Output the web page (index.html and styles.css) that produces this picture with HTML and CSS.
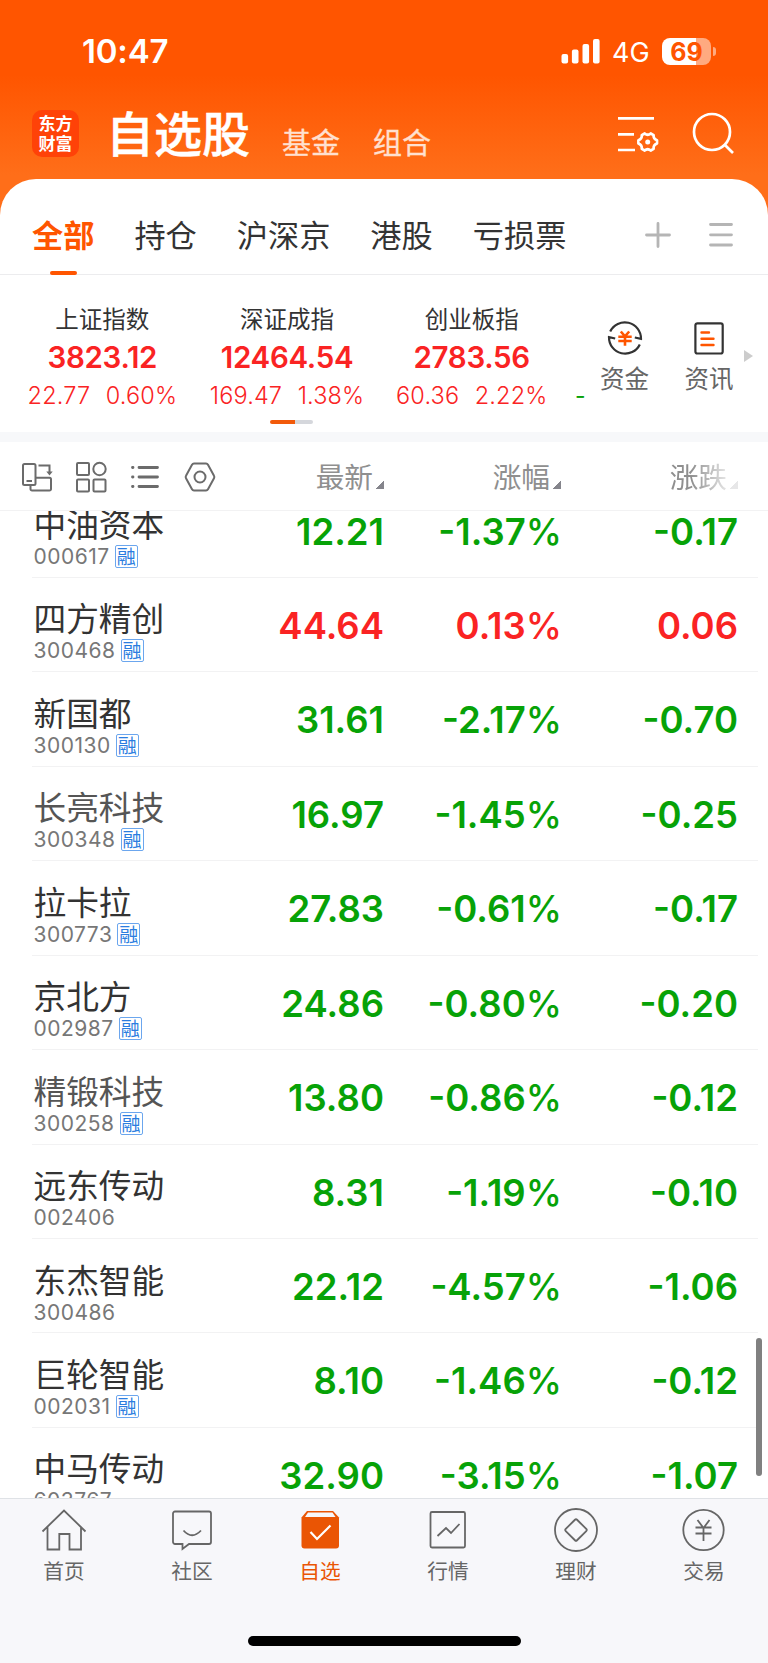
FILE: index.html
```html
<!DOCTYPE html>
<html lang="zh-CN">
<head>
  <meta charset="utf-8" />
  <meta name="viewport" content="width=device-width, initial-scale=1" />
  <title>自选股</title>
  <link rel="stylesheet" href="styles.css">
</head>
<body>
<div class="app">

<header class="top">
  <div class="status">
    <span class="status-time">10:47</span>
    <svg class="status-signal" width="39" height="25" viewBox="0 0 39 25" fill="#fff">
      <rect x="0.500" y="15" width="6.600" height="9.500" rx="2" />
      <rect x="10.900" y="10.500" width="6.600" height="14" rx="2" />
      <rect x="21.500" y="5" width="6.600" height="19.500" rx="2" />
      <rect x="32" y="0" width="6.600" height="24.500" rx="2" />
    </svg>
    <span class="status-net">4G</span>
    <span class="battery">69</span>
    <span class="battery-cap"></span>
  </div>
  <div class="nav">
    <div class="logo"><span>东方</span><span>财富</span></div>
    <h1 class="nav-title">自选股</h1>
    <a class="nav-link">基金</a>
    <a class="nav-link">组合</a>
    <svg class="nav-filter" width="44" height="44" viewBox="0 0 44 44" fill="none" stroke="#fff" stroke-width="2.700">
      <path d="M2 6.300h36M2 22.300h16M2 38h17" />
      <path stroke-linejoin="round" d="M28.700 20.500Q31.700 23 34.700 20.500L37.600 22.200Q37.200 26 41 27.200V30.600Q37.200 32 37.600 35.800L34.700 37.500Q31.700 35 28.700 37.500L25.800 35.800Q26.200 32 22.400 30.600V27.200Q26.200 26 25.800 22.200Z" transform="translate(0 1)" />
      <circle cx="31.700" cy="30" r="2.500" fill="#fff" stroke="none" />
    </svg>
    <svg class="nav-search" width="44" height="44" viewBox="0 0 44 44" fill="none" stroke="#fff" stroke-width="2.700">
      <circle cx="20" cy="20" r="18" />
      <path d="M32.700 32.700l8.300 8.300" />
    </svg>
  </div>
</header>

<main class="sheet">
  <nav class="tabs">
    <a class="tab tab--on">全部</a>
    <a class="tab">持仓</a>
    <a class="tab">沪深京</a>
    <a class="tab">港股</a>
    <a class="tab">亏损票</a>
    <svg class="tabs-add" width="26" height="26" viewBox="0 0 26 26" stroke="#b5b5b5" stroke-width="2.800" stroke-linecap="round"><path d="M1.500 13h23M13 1.500v23" /></svg>
    <svg class="tabs-menu" width="24" height="26" viewBox="0 0 24 26" stroke="#b5b5b5" stroke-width="2.800" stroke-linecap="round"><path d="M1.500 2.500h21M1.500 12.800h21M1.500 23h21" /></svg>
  </nav>

  <section class="market">
    <div class="indexes">
      <div class="index">
        <span class="index-name">上证指数</span>
        <b class="index-price">3823.12</b>
        <span class="index-diff"><i>22.77</i><i>0.60%</i></span>
      </div>
      <div class="index">
        <span class="index-name">深证成指</span>
        <b class="index-price">12464.54</b>
        <span class="index-diff"><i>169.47</i><i>1.38%</i></span>
      </div>
      <div class="index">
        <span class="index-name">创业板指</span>
        <b class="index-price">2783.56</b>
        <span class="index-diff"><i>60.36</i><i>2.22%</i></span>
      </div>
      <span class="index-peek">-</span>
    </div>
    <div class="pager"></div>
    <a class="tool">
      <svg width="36" height="36" viewBox="0 0 36 36" fill="none" stroke="#333" stroke-width="2.200">
        <path d="M3.200 11.500A16.200 16.200 0 0 1 34 18.800L27.800 17.500M32.800 24.500A16.200 16.200 0 0 1 2 17.200L8.200 18.500" />
        <path stroke="#ff5500" stroke-width="2.600" d="M13.800 11.500l4.200 4.800 4.200-4.800M11.300 16.700h13.400M11.300 21h13.400M18 16v9.800" />
      </svg>
      资金
    </a>
    <a class="tool">
      <svg width="36" height="36" viewBox="0 0 36 36" fill="none" stroke="#333" stroke-width="2.200">
        <rect x="4.400" y="3.300" width="27.300" height="30.200" rx="2" />
        <path stroke="#ff5500" stroke-width="2.400" stroke-linecap="round" d="M10.500 12.500h7.500M10.500 18.700h12M10.500 25h12" />
      </svg>
      资讯
    </a>
    <span class="market-more"></span>
  </section>

  <div class="thead">
    <div class="views">
      <svg width="32" height="32" viewBox="0 0 32 32" fill="none" stroke="#6b6b6b" stroke-width="2">
        <rect x="2" y="3" width="12.500" height="21" rx="1.500" />
        <path d="M5.500 20h5.500M17.500 4.500H28.500V11" />
        <path d="M14.500 16.800H28.500A1.500 1.500 0 0 1 30 18.300V28A1.500 1.500 0 0 1 28.500 29.500H11A1.500 1.500 0 0 1 9.500 28V24" />
        <path d="M25.300 10.500h6.400l-3.200 4z" fill="#6b6b6b" stroke="none" />
      </svg>
      <svg width="32" height="32" viewBox="0 0 32 32" fill="none" stroke="#6b6b6b" stroke-width="2">
        <rect x="2" y="2" width="12" height="12" rx="1" />
        <circle cx="24.500" cy="8" r="6.200" />
        <rect x="2" y="18.500" width="12" height="12" rx="1" />
        <rect x="18.500" y="18.500" width="12" height="12" rx="1" />
      </svg>
      <svg width="32" height="32" viewBox="0 0 32 32" fill="none" stroke="#6b6b6b" stroke-width="2.800" stroke-linecap="round">
        <path d="M10 6.500h18.500M10 16h18.500M10 25.500h18.500M3.500 6.500h.5M3.500 16h.5M3.500 25.500h.5" />
      </svg>
      <svg width="32" height="32" viewBox="0 0 32 32" fill="none" stroke="#6b6b6b" stroke-width="2" stroke-linejoin="round">
        <path d="M10 2.500H22Q23.300 2.500 24 3.800L30 14.800Q30.700 16 30 17.200L24 28.200Q23.300 29.500 22 29.500H10Q8.700 29.500 8 28.200L2 17.200Q1.300 16 2 14.800L8 3.800Q8.700 2.500 10 2.500Z" />
        <circle cx="16" cy="16" r="5.500" />
      </svg>
    </div>
    <span class="th">最新</span>
    <span class="th">涨幅</span>
    <span class="th th--fade">涨跌</span>
  </div>

  <div class="list">
    <div class="row down">
      <div class="stock"><div class="name">中油资本</div><div class="code">000617<em>融</em></div></div>
      <b>12.21</b><b>-1.37<i>%</i></b><b>-0.17</b>
    </div>
    <div class="row up">
      <div class="stock"><div class="name">四方精创</div><div class="code">300468<em>融</em></div></div>
      <b>44.64</b><b>0.13<i>%</i></b><b>0.06</b>
    </div>
    <div class="row down">
      <div class="stock"><div class="name">新国都</div><div class="code">300130<em>融</em></div></div>
      <b>31.61</b><b>-2.17<i>%</i></b><b>-0.70</b>
    </div>
    <div class="row down">
      <div class="stock"><div class="name name--dim">长亮科技</div><div class="code">300348<em>融</em></div></div>
      <b>16.97</b><b>-1.45<i>%</i></b><b>-0.25</b>
    </div>
    <div class="row down">
      <div class="stock"><div class="name">拉卡拉</div><div class="code">300773<em>融</em></div></div>
      <b>27.83</b><b>-0.61<i>%</i></b><b>-0.17</b>
    </div>
    <div class="row down">
      <div class="stock"><div class="name">京北方</div><div class="code">002987<em>融</em></div></div>
      <b>24.86</b><b>-0.80<i>%</i></b><b>-0.20</b>
    </div>
    <div class="row down">
      <div class="stock"><div class="name name--dim">精锻科技</div><div class="code">300258<em>融</em></div></div>
      <b>13.80</b><b>-0.86<i>%</i></b><b>-0.12</b>
    </div>
    <div class="row down">
      <div class="stock"><div class="name">远东传动</div><div class="code">002406</div></div>
      <b>8.31</b><b>-1.19<i>%</i></b><b>-0.10</b>
    </div>
    <div class="row down">
      <div class="stock"><div class="name">东杰智能</div><div class="code">300486</div></div>
      <b>22.12</b><b>-4.57<i>%</i></b><b>-1.06</b>
    </div>
    <div class="row down">
      <div class="stock"><div class="name">巨轮智能</div><div class="code">002031<em>融</em></div></div>
      <b>8.10</b><b>-1.46<i>%</i></b><b>-0.12</b>
    </div>
    <div class="row down">
      <div class="stock"><div class="name">中马传动</div><div class="code">603767</div></div>
      <b>32.90</b><b>-3.15<i>%</i></b><b>-1.07</b>
    </div>
    <div class="scrollbar"></div>
  </div>
</main>

<footer class="bottom">
  <nav class="bar">
    <a class="bar-item">
      <svg width="46" height="46" viewBox="0 0 46 46"><path d="M1.500 24.500L23 3.500l21.500 21M6.500 20v22.500h11.800V27h10.200v15.500h11.500V20" /></svg>
      首页
    </a>
    <a class="bar-item">
      <svg width="46" height="46" viewBox="0 0 46 46"><path d="M6 4.500h34a2 2 0 0 1 2 2V35a2 2 0 0 1-2 2H20l-6.500 5V37H6a2 2 0 0 1-2-2V6.500a2 2 0 0 1 2-2zM14.500 23.500q8.500 9.500 17.500 0" /></svg>
      社区
    </a>
    <a class="bar-item bar-item--on">
      <svg width="46" height="46" viewBox="0 0 46 46">
        <path fill="#ea5504" stroke="none" d="M10 4h26l6 6.500V38.500a3 3 0 0 1-3 3H7.500a3 3 0 0 1-3-3V10.500z" />
        <path fill="#f7f7fa" stroke="none" d="M11 5.500h24.500l3 4.500H8z" />
        <path stroke="#fff" stroke-width="2.200" d="M13.500 25l6.500 7 13.500-13.500" />
      </svg>
      自选
    </a>
    <a class="bar-item">
      <svg width="46" height="46" viewBox="0 0 46 46"><path d="M7 5h31.500a1.500 1.500 0 0 1 1.500 1.500V39a1.500 1.500 0 0 1-1.500 1.500H7A1.500 1.500 0 0 1 5.500 39V6.500A1.500 1.500 0 0 1 7 5zM12.500 29l8.500-8 5 5 8.500-9" /></svg>
      行情
    </a>
    <a class="bar-item">
      <svg width="46" height="46" viewBox="0 0 46 46"><circle cx="23" cy="23" r="21" /><rect x="15" y="15" width="16" height="16" rx="1.500" transform="rotate(45 23 23)" /></svg>
      理财
    </a>
    <a class="bar-item">
      <svg width="46" height="46" viewBox="0 0 46 46"><circle cx="22.500" cy="23" r="20.200" /><path d="M16.500 13l6 8 6-8M14.500 20.500h16M14.500 26.500h16M22.500 21v13" /></svg>
      交易
    </a>
  </nav>
  <div class="home-indicator"></div>
</footer>

</div>
</body>
</html>
```
FILE: styles.css
```css
:root {
  --orange: #ff5500;
  --red: #fa2323;
  --green: #07a207;
  --num: Inter, "Liberation Sans", sans-serif;
}
* {
  box-sizing: border-box;
}
body {
  margin: 0;
  background-color: #fff;
  font-family: "Noto Sans CJK SC", sans-serif;
  color: #333;
}
svg {
  display: block;
  flex: none;
}
i, em {
  font-style: normal;
}
.app {
  display: flex;
  flex-direction: column;
  width: 768px;
  height: 1663px;
  overflow: hidden;
}

/* header */
.top {
  flex: none;
  height: 220px;
  background: linear-gradient(#ff5500 75px, #ff6e19 175px);
  color: #fff;
}
.status {
  display: flex;
  align-items: center;
  height: 102px;
  padding-left: 82px;
  font-family: var(--num);
}
.status-time {
  width: 479px;
  font-size: 33px;
  font-weight: 600;
  letter-spacing: -0.2px;
}
.status-net {
  width: 50px;
  margin-left: 12px;
  font-size: 27px;
  padding-top: 2px;
}
.battery {
  width: 49px;
  height: 27px;
  border-radius: 8px;
  background: linear-gradient(90deg, #fff 34px, #ffaa80 34px);
  color: var(--orange);
  font-size: 25px;
  font-weight: 700;
  line-height: 28px;
  text-align: center;
}
.battery-cap {
  width: 3px;
  height: 9px;
  margin-left: 2px;
  border-radius: 0 4px 4px 0;
  background-color: #ffaa80;
}
.nav {
  display: flex;
  height: 64px;
  padding-left: 32px;
}
.logo {
  display: flex;
  flex-direction: column;
  justify-content: center;
  width: 47px;
  height: 47px;
  margin-top: 8px;
  padding-bottom: 1px;
  border-radius: 10px;
  background-color: #ff4208;
  font-size: 17px;
  font-weight: 700;
  line-height: 20px;
  text-align: center;
}
.nav-title {
  width: 176px;
  margin: -1px 0 0 27px;
  font-size: 48px;
  font-weight: 500;
  line-height: 60px;
  -webkit-text-stroke: 0.5px #fff;
}
.nav-link {
  width: 91px;
  padding-top: 17px;
  font-size: 29px;
  line-height: 44px;
  color: #ffe0d0;
  -webkit-text-stroke: 0.3px #ffe0d0;
}
.nav-filter {
  margin: 10px 0 0 152px;
}
.nav-search {
  margin: 10px 0 0 32px;
}

/* white sheet */
.sheet {
  display: flex;
  flex: 1;
  flex-direction: column;
  min-height: 0;
  margin-top: -41px;
  border-radius: 36px 36px 0 0;
  background-color: #fff;
}
.tabs {
  display: flex;
  flex: none;
  align-items: center;
  height: 96px;
  padding: 0 35px 0 32px;
  border-bottom: 1px solid #ececee;
}
.tab {
  display: flex;
  flex-direction: column;
  margin-right: 40px;
  padding-top: 15px;
  font-size: 31.200px;
  line-height: 80px;
  height: 96px;
}
.tab--on {
  color: var(--orange);
  font-weight: 700;
}
.tab--on::after {
  content: "";
  align-self: center;
  width: 27px;
  height: 4px;
  margin-top: -3px;
  border-radius: 2px;
  background-color: var(--orange);
}
.tabs-add {
  margin: 17px 0 0 auto;
}
.tabs-menu {
  margin: 17px 0 0 38px;
}

.market {
  display: grid;
  grid-template-columns: 583px 83px 86px 16px;
  grid-template-rows: 145px 12px;
  flex: none;
  height: 167px;
  border-bottom: 10px solid #f7f8fa;
}
.indexes {
  display: flex;
  grid-row: 1;
  padding-left: 10px;
}
.index {
  display: flex;
  flex: none;
  flex-direction: column;
  align-items: center;
  width: 184.700px;
  padding-top: 27px;
}
.index-name {
  font-size: 23.500px;
  line-height: 32px;
}
.index-price {
  font-family: var(--num);
  font-size: 29.500px;
  font-weight: 600;
  line-height: 46px;
  letter-spacing: -0.300px;
  color: var(--red);
}
.index-diff {
  display: flex;
  gap: 15.500px;
  font-family: var(--num);
  font-size: 23.500px;
  font-weight: 300;
  line-height: 32px;
  letter-spacing: 0.150px;
  color: var(--red);
}
.index-peek {
  padding-top: 106px;
  margin-left: 11px;
  font-family: var(--num);
  font-size: 23px;
  line-height: 30px;
  color: var(--green);
}
.pager {
  grid-row: 2;
  grid-column: 1;
  justify-self: center;
  width: 43px;
  height: 4px;
  border-radius: 2px;
  background: linear-gradient(90deg, #f25a0a 25px, #d5d7dc 25px);
}
.tool {
  grid-row: 1;
  display: flex;
  flex-direction: column;
  align-items: center;
  padding-top: 45px;
  font-size: 24.500px;
  line-height: 44px;
  color: #666;
}
.market-more {
  grid-row: 1;
  align-self: start;
  justify-self: start;
  margin: 75px 0 0 -8px;
  border: solid transparent;
  border-width: 6px 0 6px 9px;
  border-left-color: #ccc;
}

.thead {
  display: grid;
  grid-template-columns: 232px 152px 177px 177px;
  align-items: center;
  flex: none;
  height: 69px;
  border-bottom: 1px solid #f2f2f3;
}
.views {
  display: flex;
  gap: 22.200px;
  padding: 1px 0 0 21px;
}
.th {
  display: flex;
  align-items: center;
  justify-content: flex-end;
  font-size: 28.700px;
  line-height: 40px;
  color: #8f8f8f;
}
.th::after {
  content: "";
  width: 8px;
  height: 8px;
  margin: 18px 0 0 3px;
  background: linear-gradient(135deg, transparent 50%, #85858c 50%);
}
.th--fade {
  -webkit-mask-image: linear-gradient(90deg, #000 130px, rgba(0, 0, 0, 0.2) 167px);
  mask-image: linear-gradient(90deg, #000 130px, rgba(0, 0, 0, 0.2) 167px);
}

/* stock list, scrolled so that the first row is cut */
.list {
  position: relative;
  flex: 1;
  min-height: 0;
  padding-left: 32px;
  overflow: hidden;
}
.row {
  display: grid;
  grid-template-columns: 200px 152px 178px 176px;
  width: 726px;
  height: 94.450px;
  border-bottom: 1px solid #f2f2f3;
}
.row:first-child {
  margin-top: -27.500px;
}
.row b {
  font-family: var(--num);
  font-size: 36.500px;
  font-weight: 600;
  line-height: 96px;
  text-align: right;
}
.row b i {
  font-weight: 500;
}
.up b {
  color: var(--red);
}
.down b {
  color: var(--green);
}
.stock {
  padding: 18.500px 0 0 1.500px;
}
.name {
  font-size: 32.700px;
  line-height: 42px;
}
.name--dim {
  color: #555;
}
.code {
  display: flex;
  align-items: center;
  height: 23px;
  margin-top: 1px;
  font-family: var(--num);
  font-size: 21px;
  letter-spacing: 0.500px;
  color: #777;
}
.code em {
  width: 23px;
  height: 23px;
  margin-left: 5px;
  border: 1px solid #6ba6ee;
  border-radius: 2px;
  font-family: "Noto Sans CJK SC", sans-serif;
  font-size: 19px;
  line-height: 20px;
  letter-spacing: 0;
  text-align: center;
  color: #2b7de0;
}
.scrollbar {
  position: absolute;
  top: 827px;
  right: 6px;
  width: 6px;
  height: 138px;
  border-radius: 3px;
  background-color: #808080;
}

/* bottom bar */
.bottom {
  flex: none;
  height: 165px;
  border-top: 1px solid #dfe2e6;
  background-color: #f7f7fa;
}
.bar {
  display: grid;
  grid-template-columns: repeat(6, 128px);
  height: 137px;
}
.bar-item {
  display: flex;
  flex-direction: column;
  align-items: center;
  padding-top: 8px;
  font-size: 20.700px;
  line-height: 34px;
  color: #666;
}
.bar-item svg {
  fill: none;
  stroke: #666;
  stroke-width: 1.800;
}
.bar-item--on {
  color: #ea5504;
}
.home-indicator {
  width: 273px;
  height: 10px;
  margin: 0 auto;
  border-radius: 5px;
  background-color: #000;
}
```
